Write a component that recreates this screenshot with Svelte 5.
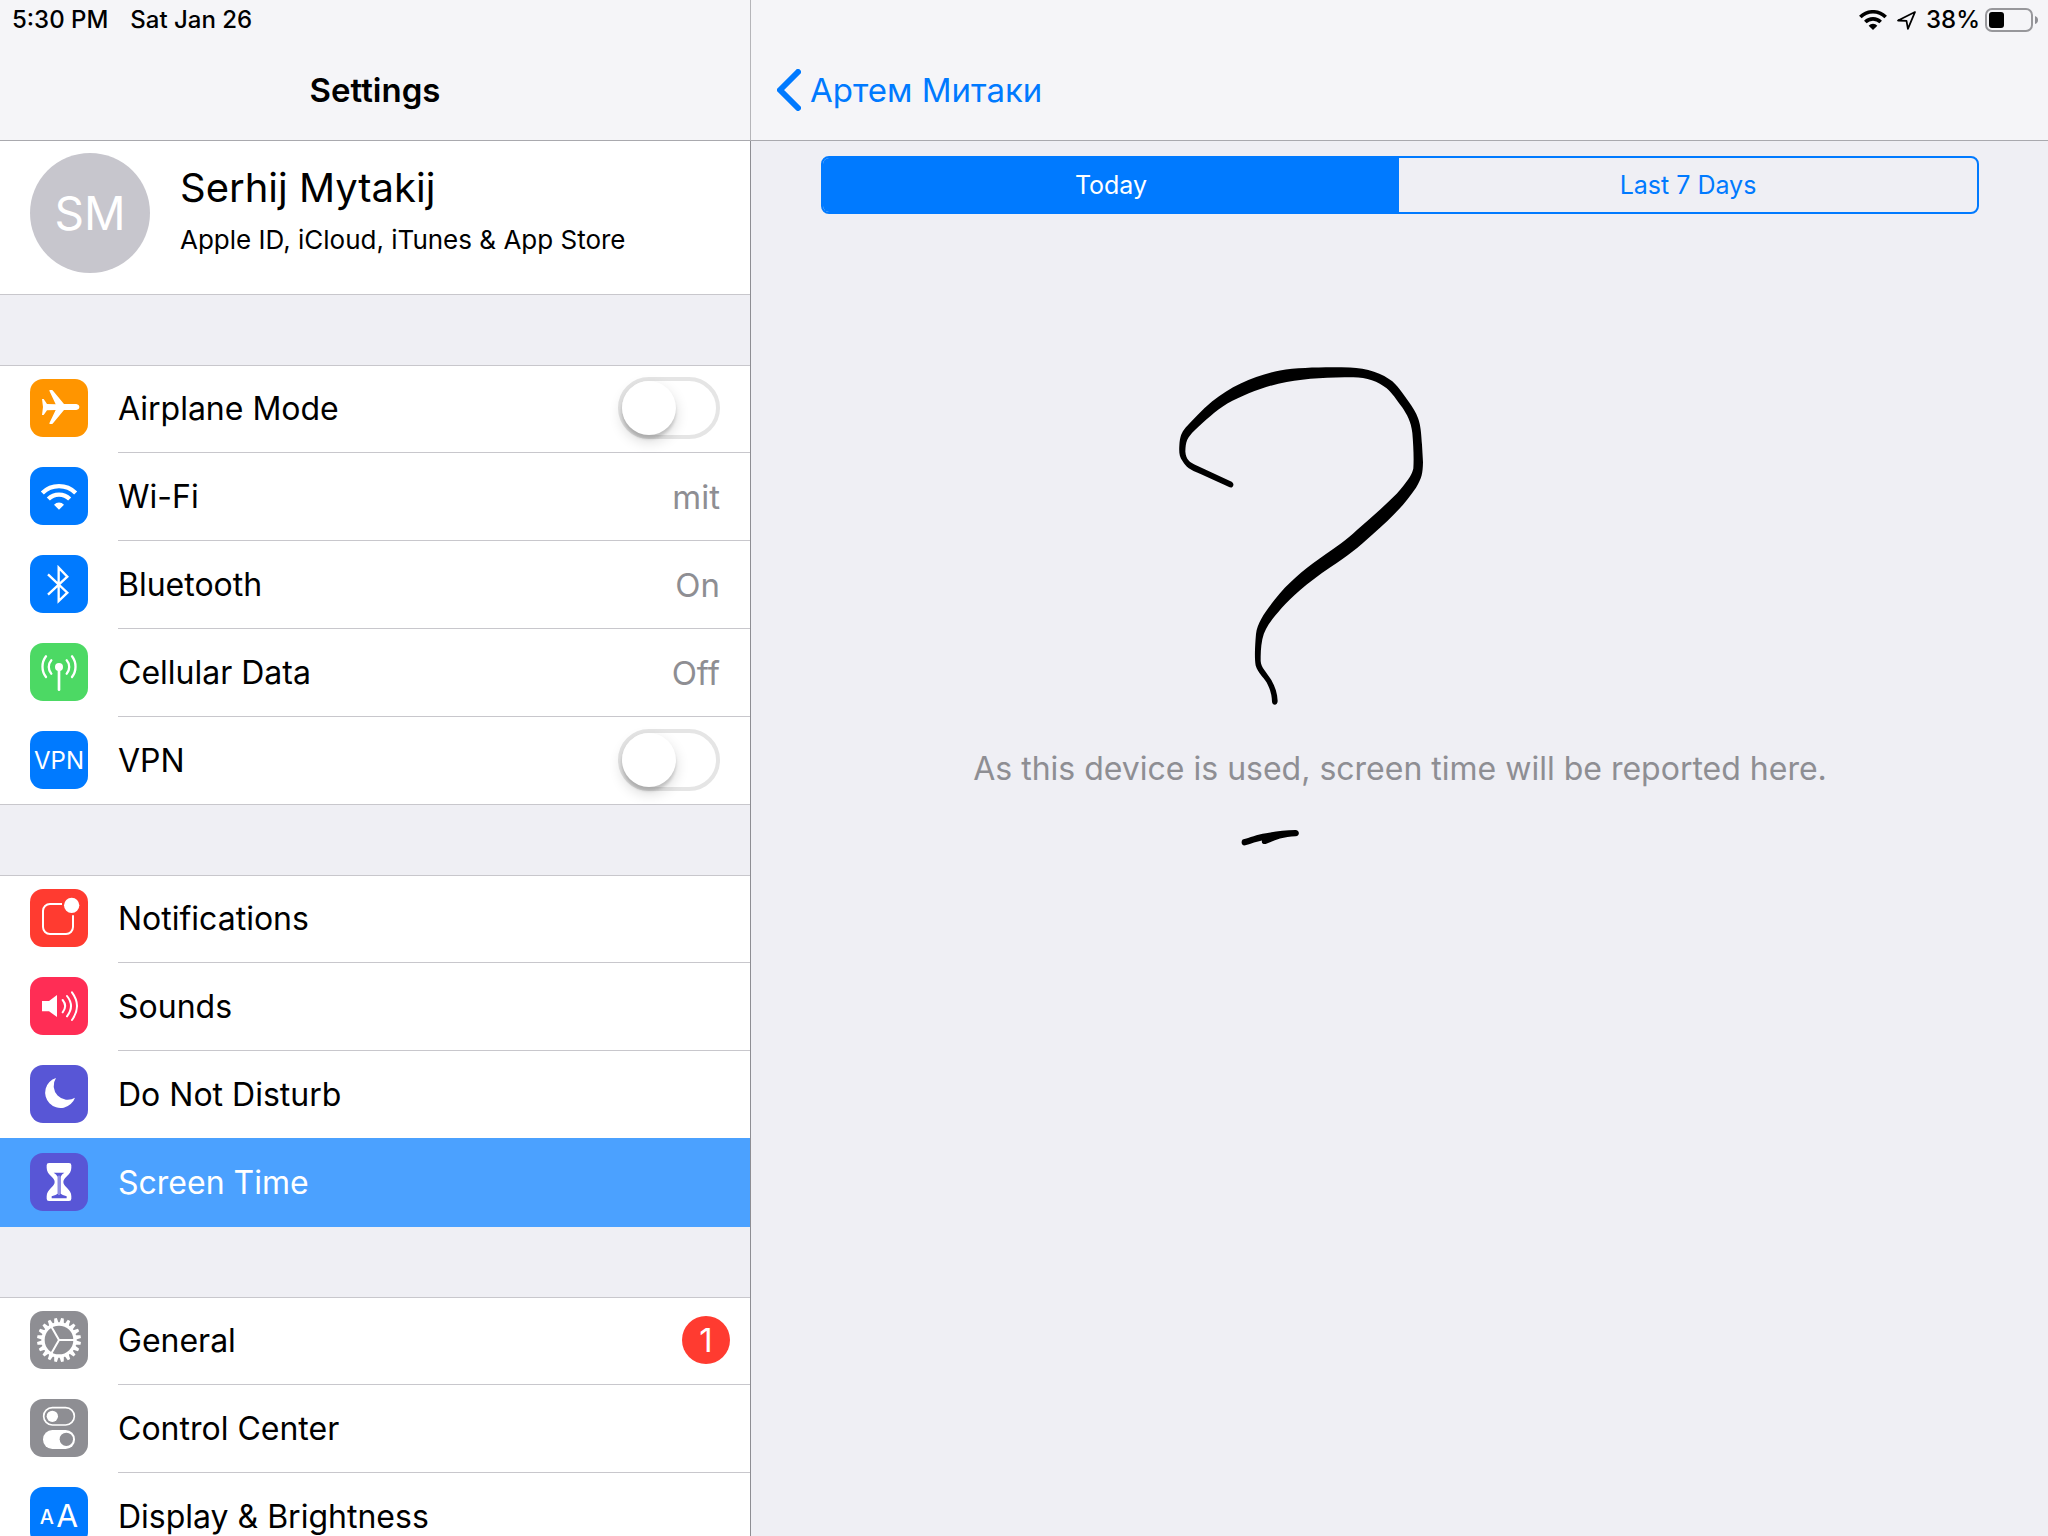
<script>
  const groups = [
    [
      { label: 'Airplane Mode', icon: 'airplane', color: 'orange', toggle: true },
      { label: 'Wi-Fi', icon: 'wifi', color: 'blue', value: 'mit' },
      { label: 'Bluetooth', icon: 'bluetooth', color: 'blue', value: 'On' },
      { label: 'Cellular Data', icon: 'cellular', color: 'green', value: 'Off' },
      { label: 'VPN', icon: 'vpn', color: 'blue', toggle: true }
    ],
    [
      { label: 'Notifications', icon: 'notifications', color: 'red' },
      { label: 'Sounds', icon: 'sounds', color: 'pink' },
      { label: 'Do Not Disturb', icon: 'moon', color: 'indigo' },
      { label: 'Screen Time', icon: 'hourglass', color: 'indigo' }
    ],
    [
      { label: 'General', icon: 'gear', color: 'gray', badge: 1 },
      { label: 'Control Center', icon: 'controls', color: 'gray' },
      { label: 'Display & Brightness', icon: 'display', color: 'blue' }
    ]
  ];

  let selected = $state('Screen Time');
  let range = $state('Today');
  let toggles = $state({ 'Airplane Mode': false, VPN: false });

  const teeth = Array.from({ length: 20 }, (_, i) => i * 18 + 9);
</script>

{#snippet glyph(name)}
  <svg class="glyph" viewBox="0 0 174 174" aria-hidden="true">
    {#if name === 'airplane'}
      <path fill="#fff" d="M36 60h5l10 15 26 1L58 35q0-2 2-2h6q2 0 3 2l33 40h37q9 2 9 9t-9 9h-37l-33 40q-1 2-3 2h-6q-2 0-2-2l19-40-26 1-10 14h-5l3-24z" />
    {:else if name === 'wifi'}
      <g fill="none" stroke="#fff" stroke-width="13">
        <path d="M37 78a71 71 0 0 1 100 0" />
        <path d="M55 96a45 45 0 0 1 64 0" />
      </g>
      <path fill="#fff" d="M87 128 72 113a21 21 0 0 1 30 0z" />
    {:else if name === 'bluetooth'}
      <path fill="none" stroke="#fff" stroke-width="7" d="M54 58l58 55-26 25V38l26 27-58 54" />
    {:else if name === 'cellular'}
      <g fill="none" stroke="#fff" stroke-width="7" stroke-linecap="round">
        <path stroke-width="8" d="M87 72v68" />
        <path d="M64 52a30 30 0 0 0 0 40M110 52a30 30 0 0 1 0 40" />
        <path d="M48 40a51 51 0 0 0 0 62M126 40a51 51 0 0 1 0 62" />
      </g>
      <circle cx="87" cy="72" r="12" fill="#fff" />
    {:else if name === 'vpn'}
      <text x="87" y="113" text-anchor="middle" font-size="72" fill="#fff">VPN</text>
    {:else if name === 'notifications'}
      <path fill="none" stroke="#fff" stroke-width="6" d="M96 45H60a21 21 0 0 0-21 21v48a21 21 0 0 0 21 21h48a21 21 0 0 0 21-21V79" />
      <circle cx="125" cy="49" r="23" fill="#fff" />
    {:else if name === 'sounds'}
      <path fill="#fff" d="M36 72h21l24-18v66l-24-17H36z" />
      <path fill="none" stroke="#fff" stroke-width="6" stroke-linecap="round" d="M98 69q15 18 0 37M111 57q24 30 0 61M126 46q30 41 0 83" />
    {:else if name === 'moon'}
      <path fill="#fff" d="M78 39A46 46 0 1 0 135 98A42 42 0 0 1 78 39z" />
    {:else if name === 'hourglass'}
      <path fill="#fff" d="M57 30h60q7 0 7 7v7c0 22-24 28-24 43s24 21 24 43v7q0 7-7 7H57q-7 0-7-7v-7c0-22 24-28 24-43S50 66 50 44v-7q0-7 7-7z" />
      <path fill="#5856d6" d="M71 59h32q-8 5-11 12v51q4 4 18 8v6H65v-6q14-4 18-8V71q-4-7-12-12z" />
      <path stroke="#fff" stroke-width="2" d="M87 68v58" />
    {:else if name === 'gear'}
      <circle cx="87" cy="87" r="48" fill="none" stroke="#fff" stroke-width="10" />
      {#each teeth as angle}
        <path fill="#fff" d="M80 38l3-17h8l3 17z" transform="rotate({angle} 87 87)" />
      {/each}
      <path fill="none" stroke="#fff" stroke-width="6" d="M87 87h48M87 87L63 45M87 87l-24 42" />
    {:else if name === 'controls'}
      <rect x="41" y="26" width="92" height="52" rx="26" fill="none" stroke="#fff" stroke-width="5" />
      <circle cx="67" cy="52" r="17" fill="#fff" />
      <rect x="39" y="93" width="96" height="57" rx="28" fill="#fff" />
      <circle cx="109" cy="121" r="20" fill="#8e8e93" />
    {:else if name === 'display'}
      <text x="29" y="110" font-size="60" font-weight="500" fill="#fff">A</text>
      <text x="79" y="119" font-size="95" fill="#fff">A</text>
    {/if}
  </svg>
{/snippet}

<div class="app">
  <aside class="sidebar">
    <header class="bar">
      <div class="status">
        <span>5:30 PM</span>
        <span>Sat Jan 26</span>
      </div>
      <div class="nav centered"><h1>Settings</h1></div>
    </header>

    <nav class="list">
      <button class="profile">
        <span class="avatar">SM</span>
        <span class="who">
          <span class="name">Serhij Mytakij</span>
          <span class="detail">Apple ID, iCloud, iTunes &amp; App Store</span>
        </span>
      </button>

      {#each groups as group}
        <div class="group">
          {#each group as item}
            {#if item.toggle}
              <label class="row">
                <span class="tile {item.color}">{@render glyph(item.icon)}</span>
                <span class="label">{item.label}</span>
                <input class="switch" type="checkbox" role="switch" bind:checked={toggles[item.label]} />
              </label>
            {:else}
              <button class="row" class:selected={selected === item.label} onclick={() => (selected = item.label)}>
                <span class="tile {item.color}">{@render glyph(item.icon)}</span>
                <span class="label">{item.label}</span>
                {#if item.value}<span class="value">{item.value}</span>{/if}
                {#if item.badge}<span class="badge">{item.badge}</span>{/if}
              </button>
            {/if}
          {/each}
        </div>
      {/each}
    </nav>
  </aside>

  <main class="pane">
    <header class="bar">
      <div class="status end">
        <svg class="status-wifi" viewBox="0 0 84 60" aria-label="Wi-Fi">
          <g fill="none" stroke="#000" stroke-width="11">
            <path d="M4 21a54 54 0 0 1 76 0" />
            <path d="M19 36a33 33 0 0 1 46 0" />
          </g>
          <path d="M42 60 29 47a18 18 0 0 1 26 0z" />
        </svg>
        <svg class="status-location" viewBox="0 0 54 54" aria-label="Location">
          <path fill="none" stroke="#000" stroke-width="5" stroke-linejoin="round" d="M51 3 3 27l24 1 4 23z" />
        </svg>
        <span class="percent">38%</span>
        <svg class="status-battery" viewBox="0 0 53 24" aria-label="Battery">
          <rect x="1" y="1" width="46" height="22" rx="6" fill="none" stroke="#97979b" stroke-width="2" />
          <rect x="4" y="4" width="15" height="16" rx="3" />
          <path fill="#8e8e93" d="M50 8q3 1 3 4t-3 4z" />
        </svg>
      </div>
      <div class="nav">
        <button class="back">
          <svg class="chevron" viewBox="0 0 24 42" aria-hidden="true">
            <path fill="none" stroke="#007aff" stroke-width="6" stroke-linecap="round" stroke-linejoin="round" d="M21 3 3 21l18 18" />
          </svg>
          Артем Митаки
        </button>
      </div>
    </header>

    <section class="content">
      <div class="segments">
        {#each ['Today', 'Last 7 Days'] as option}
          <button class="segment" class:active={range === option} aria-pressed={range === option} onclick={() => (range = option)}>{option}</button>
        {/each}
      </div>
      <p class="message">As this device is used, screen time will be reported here.</p>
      <svg class="ink" viewBox="0 0 960 1568" preserveAspectRatio="none" aria-hidden="true">
        <path d="M269 436L180 396C150 384 138 376 128 359C117 345 117 330 118 312C120 285 124 275 137 259C160 235 185 207 216 182C275 134 350 103 420 90C480 80 560 80 630 81C680 82 730 100 757 122C780 143 795 168 813 192C840 232 842 250 846 310L849 362C848 395 846 408 828 437C790 492 750 530 700 573C650 618 625 637 570 673C500 720 455 760 425 793C395 828 375 850 367 885C362 910 362 930 362 950C363 970 380 983 394 1006C406 1028 412 1045 413 1068C413 1082 397 1082 396 1070C395 1045 388 1028 380 1013C370 997 354 985 347 963C343 940 345 905 348 870C352 835 375 805 405 767C445 718 485 685 540 646C590 610 620 592 650 563C690 528 730 495 770 455C800 420 815 402 820 380C822 350 820 310 817 275C813 240 800 220 787 200C770 178 755 155 740 143C715 122 680 110 640 110C570 110 500 113 440 124C380 135 315 160 262 188C225 210 195 240 165 266C140 290 137 300 136 330C138 355 150 362 165 369L275 419C286 427 278 439 269 436Z" />
        <path d="M308 1478C330 1472 350 1463 378 1459C405 1454 435 1451 466 1450C480 1451 480 1467 467 1468C450 1469 435 1471 420 1475C405 1480 390 1486 377 1491C368 1492 364 1488 366 1481C350 1484 335 1490 316 1495C304 1497 302 1483 308 1478Z" />
      </svg>
    </section>
  </main>
</div>

<style>
  :global(body) {
    margin: 0;
    background: #efeff4;
  }

  .app {
    display: grid;
    grid-template-columns: 751px 1fr;
    height: 100vh;
    overflow: hidden;
    background: #efeff4;
    color: #000;
    font-family: Inter, 'Liberation Sans', sans-serif;
    font-size: 33px;
    line-height: 40px;
  }

  button {
    margin: 0;
    padding: 0;
    border: 0;
    background: none;
    color: inherit;
    font: inherit;
    text-align: left;
    cursor: pointer;
  }

  .sidebar,
  .pane {
    display: flex;
    flex-direction: column;
    min-width: 0;
    min-height: 0;
  }

  .bar {
    flex: none;
    border-bottom: 1px solid #a9a9ae;
    background: #f5f5f8;
  }

  .sidebar .bar {
    border-right: 1px solid #b5b5b9;
  }

  .status {
    display: flex;
    align-items: center;
    gap: 22px;
    height: 40px;
    padding: 0 12px;
    font-size: 24px;
    font-weight: 500;
  }

  .status.end {
    justify-content: flex-end;
    gap: 0;
    padding: 0 10px;
  }

  .status-wifi {
    width: 28px;
    height: 20px;
    margin-right: 10px;
  }

  .status-location {
    width: 19px;
    height: 19px;
    margin-right: 10px;
  }

  .percent {
    margin-right: 5px;
  }

  .status-battery {
    width: 53px;
    height: 24px;
  }

  .nav {
    display: flex;
    align-items: center;
    height: 100px;
    padding: 0 26px;
  }

  .centered {
    justify-content: center;
  }

  h1 {
    margin: 0;
    font-size: 33px;
    font-weight: 600;
  }

  .back {
    display: flex;
    align-items: center;
    gap: 9px;
    color: #007aff;
  }

  .chevron {
    width: 24px;
    height: 42px;
  }

  .list {
    display: flex;
    flex: 1;
    flex-direction: column;
    gap: 70px;
    min-height: 0;
    overflow-y: auto;
    scrollbar-width: none;
    border-right: 1px solid #8e8e93;
  }

  .profile {
    display: flex;
    flex: none;
    gap: 30px;
    padding: 12px 30px 21px;
    border-bottom: 1px solid #c8c7cc;
    background: #fff;
  }

  .avatar {
    display: grid;
    place-items: center;
    width: 120px;
    height: 120px;
    border-radius: 50%;
    background: #c7c6cd;
    color: #fff;
    font-size: 46px;
  }

  .who {
    display: flex;
    flex-direction: column;
    gap: 8px;
    padding-top: 9px;
  }

  .name {
    font-size: 40px;
    line-height: 52px;
  }

  .detail {
    font-size: 26px;
    line-height: 36px;
  }

  .group {
    flex: none;
    background: #fff;
  }

  .row {
    display: flex;
    align-items: center;
    gap: 30px;
    box-sizing: border-box;
    width: 100%;
    height: 88px;
    padding: 0 30px 2px;
    background: linear-gradient(#c8c7cc, #c8c7cc) 118px 100% / 100% 1px no-repeat;
  }

  .row:first-child {
    box-shadow: inset 0 1px 0 #c8c7cc;
  }

  .row:last-child {
    background-position: 0 100%;
  }

  .row:has(+ .selected) {
    background: linear-gradient(#4ba1ff, #4ba1ff) 0 100% / 100% 1px no-repeat;
  }

  .row.selected {
    background: #4ba1ff;
    color: #fff;
  }

  .tile {
    flex: none;
    width: 58px;
    height: 58px;
    overflow: hidden;
    border-radius: 13px;
  }

  .glyph {
    display: block;
    width: 100%;
    height: 100%;
  }

  .orange { background: #ff9500; }
  .blue { background: #007aff; }
  .green { background: #4cd964; }
  .red { background: #ff3b30; }
  .pink { background: #ff2d55; }
  .indigo { background: #5856d6; }
  .gray { background: #8e8e93; }

  .label,
  .value {
    padding-top: 2px;
    line-height: 42px;
  }

  .label {
    flex: 1;
    font-size: 32px;
  }

  .value {
    color: #8e8e93;
  }

  .badge {
    width: 48px;
    height: 48px;
    margin-right: -10px;
    border-radius: 24px;
    background: #ff3b30;
    color: #fff;
    line-height: 48px;
    text-align: center;
  }

  .switch {
    flex: none;
    appearance: none;
    box-sizing: border-box;
    width: 102px;
    height: 62px;
    margin: 0;
    border: 4px solid #e5e5e5;
    border-radius: 31px;
    background: #fff;
  }

  .switch::before {
    display: block;
    width: 54px;
    height: 54px;
    border-radius: 50%;
    background: #fff;
    box-shadow: 0 6px 14px rgba(0, 0, 0, 0.16), 0 4px 3px rgba(0, 0, 0, 0.14);
    content: '';
  }

  .switch:checked {
    border-color: #4cd964;
    background: #4cd964;
  }

  .switch:checked::before {
    margin-left: auto;
  }

  .content {
    position: relative;
    display: flex;
    flex: 1;
    flex-direction: column;
    padding: 15px 69px 212px 70px;
  }

  .segments {
    display: grid;
    grid-template-columns: calc(50% - 1px) 1fr;
    box-sizing: border-box;
    height: 58px;
    overflow: hidden;
    border: 2px solid #007aff;
    border-radius: 8px;
  }

  .segment {
    color: #007aff;
    font-size: 25px;
    text-align: center;
  }

  .segment.active {
    background: #007aff;
    color: #fff;
  }

  .message {
    display: grid;
    flex: 1;
    place-items: center;
    margin: 0;
    color: #8e8e93;
    font-size: 32px;
    text-align: center;
  }

  .ink {
    position: absolute;
    top: 199px;
    left: 389px;
    width: 320px;
    height: 530px;
    pointer-events: none;
  }
</style>
